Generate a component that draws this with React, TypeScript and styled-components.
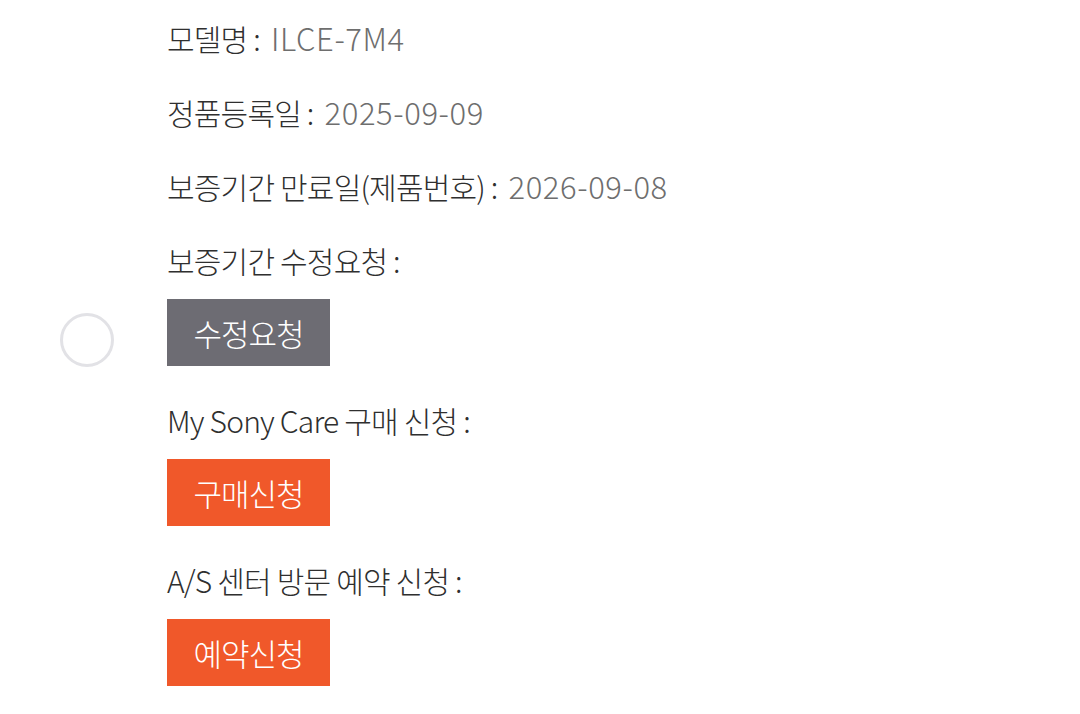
import styled, { createGlobalStyle } from "styled-components";

const GlobalStyle = createGlobalStyle`
  html, body {
    margin: 0;
    padding: 0;
    background: #ffffff;
  }
  body {
    font-family: "Noto Sans CJK KR", "Noto Sans", sans-serif;
  }
`;

const Page = styled.div`
  position: relative;
  width: 1080px;
  min-height: 714px;
  box-sizing: border-box;
  padding: 18px 0 0 167px;
  display: flex;
  flex-direction: column;
  gap: 34px;
`;

const Row = styled.div`
  display: flex;
  align-items: center;
  height: 40px;
  font-size: 30px;
  font-weight: 300;
  line-height: 40px;
  letter-spacing: -0.8px;
  color: #2f2f2f;
  white-space: nowrap;
`;

const Value = styled.span`
  color: #6e6e6e;
  font-size: 31px;
  letter-spacing: 0.6px;
  margin-left: 11px;
`;

const Group = styled.div`
  display: flex;
  flex-direction: column;
  gap: 19px;
`;

const ActionButton = styled.button<{ $tone: "gray" | "orange" }>`
  width: 163px;
  height: 67px;
  border: none;
  border-radius: 0;
  padding: 0;
  background: ${(p) => (p.$tone === "gray" ? "#6d6c73" : "#f0582a")};
  color: #ffffff;
  font-family: "Noto Sans CJK KR", "Noto Sans", sans-serif;
  font-size: 31px;
  font-weight: 300;
  letter-spacing: -1px;
  cursor: pointer;
`;

// floating assistive-touch ring
const FloatingRing = styled.div`
  position: absolute;
  left: 60px;
  top: 313px;
  width: 48px;
  height: 48px;
  border-radius: 50%;
  border: 3px solid #e2e2e6;
  background: #ffffff;
`;

export default function App() {
  return (
    <>
      <GlobalStyle />
      <Page>
        <Row>
          모델명 :<Value>ILCE-7M4</Value>
        </Row>
        <Row>
          정품등록일 :<Value>2025-09-09</Value>
        </Row>
        <Row>
          보증기간 만료일(제품번호) :<Value>2026-09-08</Value>
        </Row>
        <Group>
          <Row>보증기간 수정요청 :</Row>
          <ActionButton $tone="gray">수정요청</ActionButton>
        </Group>
        <Group>
          <Row>My Sony Care 구매 신청 :</Row>
          <ActionButton $tone="orange">구매신청</ActionButton>
        </Group>
        <Group>
          <Row>A/S 센터 방문 예약 신청 :</Row>
          <ActionButton $tone="orange">예약신청</ActionButton>
        </Group>
        <FloatingRing />
      </Page>
    </>
  );
}
